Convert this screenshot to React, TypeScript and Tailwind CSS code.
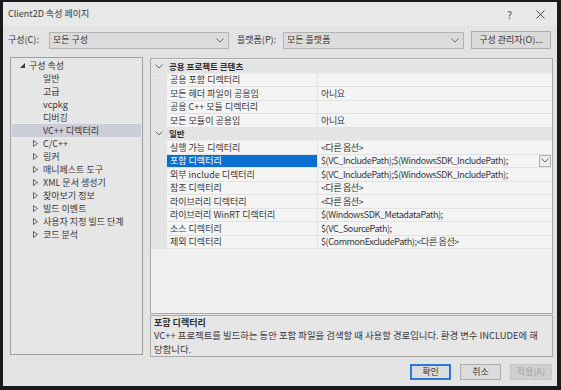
import React from "react";

type Row = { name: string; value: string; selected?: boolean };
type Cat = { title: string; rows: Row[] };

const cats: Cat[] = [
  {
    title: "공용 프로젝트 콘텐츠",
    rows: [
      { name: "공용 포함 디렉터리", value: "" },
      { name: "모든 헤더 파일이 공용임", value: "아니요" },
      { name: "공용 C++ 모듈 디렉터리", value: "" },
      { name: "모든 모듈이 공용임", value: "아니요" },
    ],
  },
  {
    title: "일반",
    rows: [
      { name: "실행 가능 디렉터리", value: "<다른 옵션>" },
      { name: "포함 디렉터리", value: "$(VC_IncludePath);$(WindowsSDK_IncludePath);", selected: true },
      { name: "외부 include 디렉터리", value: "$(VC_IncludePath);$(WindowsSDK_IncludePath);" },
      { name: "참조 디렉터리", value: "<다른 옵션>" },
      { name: "라이브러리 디렉터리", value: "<다른 옵션>" },
      { name: "라이브러리 WinRT 디렉터리", value: "$(WindowsSDK_MetadataPath);" },
      { name: "소스 디렉터리", value: "$(VC_SourcePath);" },
      { name: "제외 디렉터리", value: "$(CommonExcludePath);<다른 옵션>" },
    ],
  },
];

const treeChildren = ["일반", "고급", "vcpkg", "디버깅", "VC++ 디렉터리"];
const treeCollapsed = [
  "C/C++",
  "링커",
  "매니페스트 도구",
  "XML 문서 생성기",
  "찾아보기 정보",
  "빌드 이벤트",
  "사용자 지정 빌드 단계",
  "코드 분석",
];

function Chevron({ className = "" }: { className?: string }) {
  return (
    <svg width="8" height="5" viewBox="0 0 8 5" className={className}>
      <path d="M0.5 0.5 L4 4 L7.5 0.5" fill="none" stroke="#6a6a6a" strokeWidth="1" />
    </svg>
  );
}

function Combo({ text, width }: { text: string; width: string }) {
  return (
    <div className={`${width} h-[17px] flex items-center justify-between border border-[#b4b4b4] bg-[#dcdcdc] pl-[3px] pr-[4px]`}>
      <span>{text}</span>
      <Chevron />
    </div>
  );
}

export default function App() {
  return (
    <div className="w-[561px] h-[390px] bg-[#1b1b1b] pl-[3px] pt-[2px] pr-[4px] pb-[4px] font-['Noto_Sans_CJK_KR',sans-serif] text-[9px] text-[#383838]">
      <div className="h-full bg-[#e3e3e3] flex flex-col">
        {/* title bar */}
        <div className="h-[24px] flex items-center pl-[5px] pr-[12px] bg-[#e8e8e8]">
          <span className="text-[9px] text-[#3a3a3a]">Client2D 속성 페이지</span>
          <span className="ml-auto text-[10px] text-[#444]">?</span>
          <svg width="9" height="9" viewBox="0 0 9 9" className="ml-[24px]">
            <path d="M0.5 0.5 L8.5 8.5 M8.5 0.5 L0.5 8.5" stroke="#444" strokeWidth="1" />
          </svg>
        </div>

        {/* config row */}
        <div className="mt-[5px] h-[18px] flex items-center pl-[5px]">
          <span className="w-[41px]">구성(C):</span>
          <Combo text="모든 구성" width="w-[180px]" />
          <span className="ml-[8px] w-[46px]">플랫폼(P):</span>
          <Combo text="모든 플랫폼" width="w-[181px]" />
          <div className="ml-[7px] w-[80px] h-[18px] flex items-center justify-center border border-[#adadad] bg-[#dadada]">
            구성 관리자(O)...
          </div>
        </div>

        {/* main */}
        <div className="mt-[8px] flex pl-[7px] pr-[4px]">
          {/* tree */}
          <div className="w-[133px] h-[298px] border border-[#9f9f9f] bg-[#e6e6e6] pt-[1px] pr-[1px] pl-[1px]">
            <div className="h-[13px] flex items-center">
              <svg width="5" height="5" viewBox="0 0 5 5" className="ml-[8px]">
                <path d="M5 0 L5 5 L0 5 Z" fill="#3a3a3a" />
              </svg>
              <span className="ml-[4px]">구성 속성</span>
            </div>
            {treeChildren.map((t) => (
              <div
                key={t}
                className={`h-[13px] flex items-center pl-[31px] ${t === "VC++ 디렉터리" ? "bg-[#cbcdd9]" : ""}`}
              >
                {t}
              </div>
            ))}
            {treeCollapsed.map((t) => (
              <div key={t} className="h-[13px] flex items-center">
                <svg width="5" height="7" viewBox="0 0 5 7" className="ml-[21px]">
                  <path d="M0.5 0.5 L4.5 3.5 L0.5 6.5 Z" fill="none" stroke="#555" strokeWidth="0.9" />
                </svg>
                <span className="ml-[5px]">{t}</span>
              </div>
            ))}
          </div>

          {/* right side */}
          <div className="ml-[7px] flex-1 flex flex-col">
            <div className="h-[256px] border border-[#a8a8a8] bg-[#f0f0f0] pt-[1px] mt-[1px]">
              {cats.map((c) => (
                <div key={c.title}>
                  <div className="h-[13.5px] flex items-center bg-[#e4e4e4] border-b border-[#e9e9e9]">
                    <Chevron className="ml-[4px]" />
                    <span className="ml-[6px] text-[8.5px] font-semibold text-[#2e2e2e]">{c.title}</span>
                  </div>
                  {c.rows.map((r) => (
                    <div key={r.name} className="h-[13.5px] flex bg-[#e4e4e4]">
                      <div className="w-[16px]" />
                      <div
                        className={`w-[151px] flex items-center pl-[3px] border-b border-r border-[#e2e2e2] whitespace-nowrap ${
                          r.selected ? "bg-[#0a6fd1] text-white" : "bg-[#f4f4f4]"
                        }`}
                      >
                        {r.name}
                      </div>
                      <div className="flex-1 flex items-center pl-[3px] bg-[#f4f4f4] border-b border-[#e2e2e2] whitespace-nowrap">
                        <span className="tracking-[-0.4px]">{r.value}</span>
                        {r.selected ? (
                          <div className="ml-auto mr-[1px] w-[12px] h-[12px] border border-[#b0b0b0] bg-[#ececec] flex items-center justify-center">
                            <Chevron />
                          </div>
                        ) : null}
                      </div>
                    </div>
                  ))}
                </div>
              ))}
            </div>
            <div className="mt-[1px] h-[42px] border border-[#a8a8a8] bg-[#e6e6e6] pl-[3px] pt-[1px] whitespace-nowrap">
              <div className="h-[12px] leading-[12px] text-[9px] font-semibold text-[#2e2e2e]">포함 디렉터리</div>
              <div className="text-[9.4px] leading-[13.5px]">
                <div>VC++ 프로젝트를 빌드하는 동안 포함 파일을 검색할 때 사용할 경로입니다. 환경 변수 INCLUDE에 해</div>
                <div>당합니다.</div>
              </div>
            </div>
          </div>
        </div>

        {/* buttons */}
        <div className="mt-[7px] flex justify-end pr-[5px] gap-[9px]">
          <div className="w-[41px] h-[16px] flex items-center justify-center border-2 border-[#2b79d6] bg-[#dcdcdc]">
            확인
          </div>
          <div className="w-[41px] h-[16px] flex items-center justify-center border border-[#adadad] bg-[#dcdcdc]">
            취소
          </div>
          <div className="w-[42px] h-[16px] flex items-center justify-center border border-[#c6c6c6] bg-[#cfcfcf] text-[#a2a2a2]">
            적용(A)
          </div>
        </div>
      </div>
    </div>
  );
}
